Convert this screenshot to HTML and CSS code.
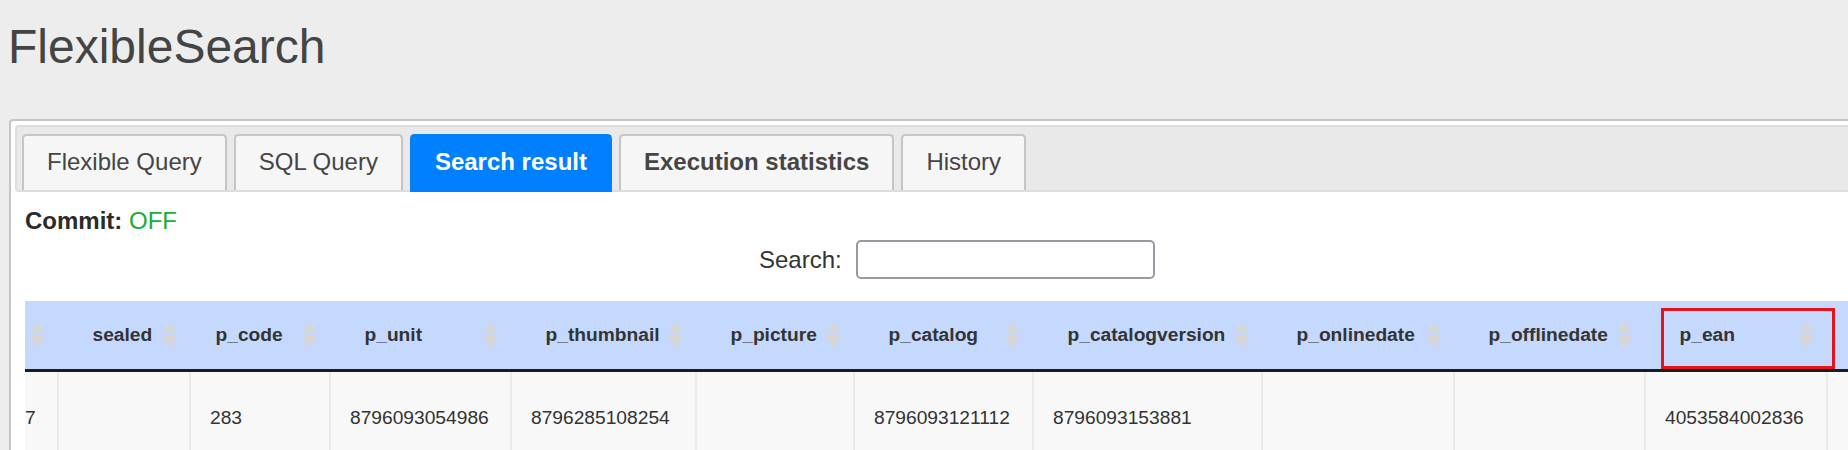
FILE: index.html
```html
<!DOCTYPE html>
<html lang="en">
<head>
<meta charset="utf-8">
<title>FlexibleSearch</title>
<link rel="stylesheet" href="styles.css">
</head>
<body>
<h1 class="page-title">FlexibleSearch</h1>
<div class="tabs">
  <ul class="tab-nav">
    <li class="tab">Flexible Query</li>
    <li class="tab">SQL Query</li>
    <li class="tab tab-active">Search result</li>
    <li class="tab tab-bold">Execution statistics</li>
    <li class="tab">History</li>
  </ul>
  <div class="panel">
    <div class="commit"><b>Commit:</b> <span class="off">OFF</span></div>
    <div class="filter"><label class="filter-label">Search:</label><input class="filter-input" type="search"></div>
    <div class="scroll">
      <table class="results">
        <colgroup>
          <col class="w-pk"><col class="w-sealed"><col class="w-code"><col class="w-unit"><col class="w-thumb"><col class="w-picture"><col class="w-catalog"><col class="w-catver"><col class="w-online"><col class="w-offline"><col class="w-ean"><col class="w-next">
        </colgroup>
        <thead>
          <tr>
            <th><div class="th-inner"><span>PK</span><svg class="sort" viewBox="0 0 15 28"><path d="M7.5 0 L15 13 L0 13 Z M0 15 L15 15 L7.5 28 Z"/></svg></div></th>
            <th><div class="th-inner"><span>sealed</span><svg class="sort" viewBox="0 0 15 28"><path d="M7.5 0 L15 13 L0 13 Z M0 15 L15 15 L7.5 28 Z"/></svg></div></th>
            <th><div class="th-inner th-tight"><span>p_code</span><svg class="sort" viewBox="0 0 15 28"><path d="M7.5 0 L15 13 L0 13 Z M0 15 L15 15 L7.5 28 Z"/></svg></div></th>
            <th><div class="th-inner"><span>p_unit</span><svg class="sort" viewBox="0 0 15 28"><path d="M7.5 0 L15 13 L0 13 Z M0 15 L15 15 L7.5 28 Z"/></svg></div></th>
            <th><div class="th-inner"><span>p_thumbnail</span><svg class="sort" viewBox="0 0 15 28"><path d="M7.5 0 L15 13 L0 13 Z M0 15 L15 15 L7.5 28 Z"/></svg></div></th>
            <th><div class="th-inner"><span>p_picture</span><svg class="sort" viewBox="0 0 15 28"><path d="M7.5 0 L15 13 L0 13 Z M0 15 L15 15 L7.5 28 Z"/></svg></div></th>
            <th><div class="th-inner"><span>p_catalog</span><svg class="sort" viewBox="0 0 15 28"><path d="M7.5 0 L15 13 L0 13 Z M0 15 L15 15 L7.5 28 Z"/></svg></div></th>
            <th><div class="th-inner"><span>p_catalogversion</span><svg class="sort" viewBox="0 0 15 28"><path d="M7.5 0 L15 13 L0 13 Z M0 15 L15 15 L7.5 28 Z"/></svg></div></th>
            <th><div class="th-inner"><span>p_onlinedate</span><svg class="sort" viewBox="0 0 15 28"><path d="M7.5 0 L15 13 L0 13 Z M0 15 L15 15 L7.5 28 Z"/></svg></div></th>
            <th><div class="th-inner"><span>p_offlinedate</span><svg class="sort" viewBox="0 0 15 28"><path d="M7.5 0 L15 13 L0 13 Z M0 15 L15 15 L7.5 28 Z"/></svg></div></th>
            <th class="th-marked"><div class="th-inner"><span>p_ean</span><svg class="sort" viewBox="0 0 15 28"><path d="M7.5 0 L15 13 L0 13 Z M0 15 L15 15 L7.5 28 Z"/></svg></div><div class="mark"></div></th>
            <th><div class="th-inner"><span>p_supplieralternativeaid</span><svg class="sort" viewBox="0 0 15 28"><path d="M7.5 0 L15 13 L0 13 Z M0 15 L15 15 L7.5 28 Z"/></svg></div></th>
          </tr>
        </thead>
        <tbody>
          <tr>
            <td>8796093087777</td>
            <td></td>
            <td>283</td>
            <td>8796093054986</td>
            <td>8796285108254</td>
            <td></td>
            <td>8796093121112</td>
            <td>8796093153881</td>
            <td></td>
            <td></td>
            <td>4053584002836</td>
            <td></td>
          </tr>
        </tbody>
      </table>
    </div>
  </div>
</div>
</body>
</html>
```

FILE: styles.css
```css
html, body {
  margin: 0;
  padding: 0;
  overflow: hidden;
}

body {
  background: #ededed;
  font-family: "Liberation Sans", Arial, sans-serif;
  font-size: 24px;
  color: #333;
  width: 1848px;
  height: 450px;
}

.page-title {
  margin: 0 0 45px 0;
  padding: 19px 0 0 8px;
  font-size: 48px;
  line-height: 55px;
  font-weight: normal;
  color: #444;
}

.tabs {
  margin-left: 9px;
  width: 2400px;
  background: #fff;
  border: 2px solid #c5c5c5;
  border-radius: 4px;
  padding: 4px;
}

.tab-nav {
  list-style: none;
  margin: 0;
  padding: 7px 5px 0 5px;
  display: flex;
  align-items: flex-start;
  gap: 7px;
  background: #e9e9e9;
  border: 2px solid #dddddd;
  border-radius: 4px;
}

.tab {
  height: 56px;
  box-sizing: border-box;
  padding: 12px 23px 14px 23px;
  line-height: 28px;
  white-space: nowrap;
  background: #f6f6f6;
  color: #454545;
  border: 2px solid #c5c5c5;
  border-bottom: 0;
  border-radius: 4.5px 4.5px 0 0;
}

.tab-bold {
  font-weight: bold;
}

.tab-active {
  height: 58px;
  margin-bottom: -2px;
  background: #007fff;
  border-color: #007fff;
  color: #fff;
  font-weight: bold;
}

.panel {
  padding: 15px 0 0 10px;
}

.commit {
  line-height: 28px;
  color: #2b2b2b;
}

.off {
  color: #19ad36;
}

.filter {
  margin-top: 5px;
  padding-left: 734px;
  display: flex;
  align-items: center;
  height: 39px;
}

.filter-label {
  color: #333;
}

.filter-input {
  margin: 0 0 0 14px;
  width: 299px;
  height: 39px;
  box-sizing: border-box;
  border: 2px solid #9a98a3;
  border-radius: 5px;
  background: #fff;
  padding: 0 6px;
  font: inherit;
  outline: none;
}

.scroll {
  margin-top: 22px;
  overflow: hidden;
}

.results {
  margin-left: -149px;
  width: 2170px;
  table-layout: fixed;
  border-collapse: separate;
  border-spacing: 0;
  font-size: 19.2px;
  color: #333;
}

.w-pk { width: 181px; }
.w-sealed { width: 132px; }
.w-code { width: 140px; }
.w-unit { width: 181px; }
.w-thumb { width: 185px; }
.w-picture { width: 158px; }
.w-catalog { width: 179px; }
.w-catver { width: 229px; }
.w-online { width: 192px; }
.w-offline { width: 191px; }
.w-ean { width: 182px; }
.w-next { width: 220px; }

.results th {
  padding: 0;
  background: #c4d9fd;
  border-bottom: 3px solid #1c1c1c;
  text-align: left;
  font-weight: bold;
  white-space: nowrap;
  position: relative;
}

.th-inner {
  height: 68px;
  box-sizing: border-box;
  padding: 0 12px 0 35.5px;
  display: flex;
  align-items: center;
  justify-content: space-between;
  overflow: hidden;
}

.th-tight {
  padding-left: 26.5px;
}

.sort {
  width: 15px;
  height: 28px;
  flex: none;
  fill: #d6d6d6;
}

.mark {
  position: absolute;
  z-index: 2;
  left: 17px;
  top: 7px;
  width: 174px;
  height: 61px;
  box-sizing: border-box;
  border: 3px solid #e5141b;
}

.results td {
  padding: 35px 0 35px 19px;
  line-height: 22px;
  background: #f8f8f8;
  border-left: 2px solid #ebebeb;
  white-space: nowrap;
  overflow: hidden;
}
```
